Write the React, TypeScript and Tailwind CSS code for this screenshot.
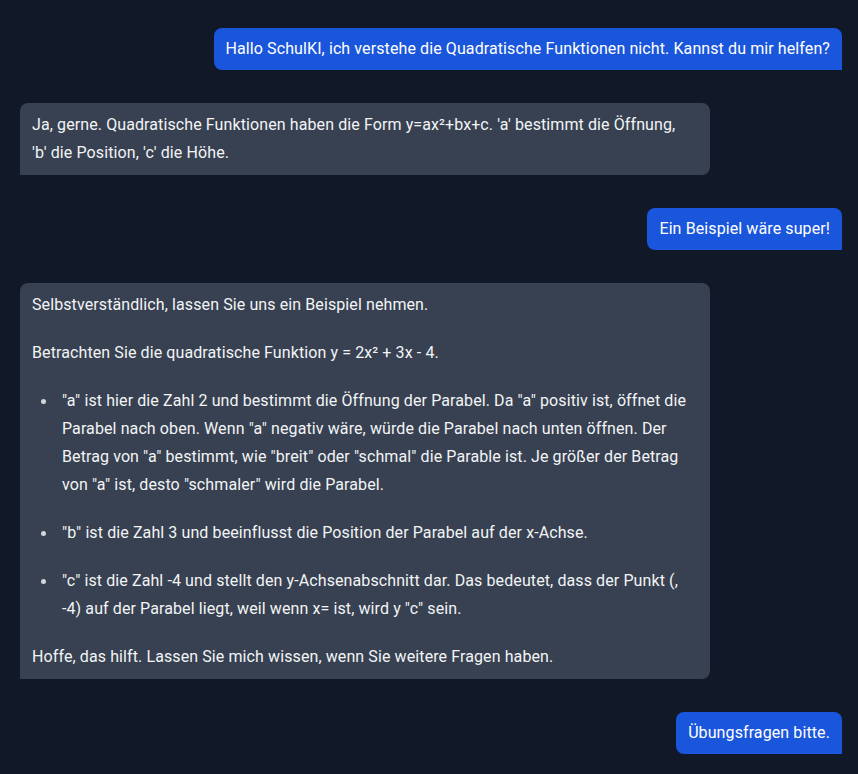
import React from 'react';

type Msg = { from: 'user' | 'bot'; text?: string; body?: React.ReactNode };

const Bullet: React.FC<{ children: React.ReactNode; className?: string }> = ({ children, className = '' }) => (
  <li className={`flex ${className}`}>
    <span className="w-[30px] shrink-0 pl-[9px] pt-[12px]">
      <span className="block w-[5px] h-[5px] rounded-full bg-gray-300"></span>
    </span>
    <span>{children}</span>
  </li>
);

const messages: Msg[] = [
  { from: 'user', text: 'Hallo SchulKI, ich verstehe die Quadratische Funktionen nicht. Kannst du mir helfen?' },
  {
    from: 'bot',
    body: (
      <p>
        Ja, gerne. Quadratische Funktionen haben die Form y=ax²+bx+c. 'a' bestimmt die Öffnung,
        <br />
        'b' die Position, 'c' die Höhe.
      </p>
    ),
  },
  { from: 'user', text: 'Ein Beispiel wäre super!' },
  {
    from: 'bot',
    body: (
      <>
        <p>Selbstverständlich, lassen Sie uns ein Beispiel nehmen.</p>
        <p className="mt-5">Betrachten Sie die quadratische Funktion y = 2x² + 3x - 4.</p>
        <ul className="mt-5">
          <Bullet>
            "a" ist hier die Zahl 2 und bestimmt die Öffnung der Parabel. Da "a" positiv ist, öffnet die Parabel nach oben. Wenn "a" negativ wäre, würde die Parabel nach unten öffnen. Der Betrag von "a" bestimmt, wie "breit" oder "schmal" die Parable ist. Je größer der Betrag von "a" ist, desto "schmaler" wird die Parabel.
          </Bullet>
          <Bullet className="mt-5">"b" ist die Zahl 3 und beeinflusst die Position der Parabel auf der x-Achse.</Bullet>
          <Bullet className="mt-5">
            "c" ist die Zahl -4 und stellt den y-Achsenabschnitt dar. Das bedeutet, dass der Punkt (,
            <br />
            -4) auf der Parabel liegt, weil wenn x= ist, wird y "c" sein.
          </Bullet>
        </ul>
        <p className="mt-5">Hoffe, das hilft. Lassen Sie mich wissen, wenn Sie weitere Fragen haben.</p>
      </>
    ),
  },
  { from: 'user', text: 'Übungsfragen bitte.' },
];

const App: React.FC = () => {
  return (
    <div
      className="min-h-screen bg-[#111827] pt-[28px] pb-6 pl-[20px] pr-[16px] flex flex-col gap-[33px] text-[16px] tracking-[0.1px] text-gray-100"
      style={{ fontFamily: 'Roboto, "Noto Sans", sans-serif' }}
    >
      {messages.map((m, i) =>
        m.from === 'user' ? (
          <div key={i} className="flex justify-end">
            <div className="bg-[#1a56db] text-white rounded-lg rounded-br-none px-3 py-2 leading-[26px]">{m.text}</div>
          </div>
        ) : (
          <div key={i} className="flex justify-start">
            <div className="w-[690px] bg-[#374151] text-gray-100 rounded-lg rounded-bl-none px-3 py-2 leading-7">
              {m.body}
            </div>
          </div>
        )
      )}
    </div>
  );
};

export default App;
